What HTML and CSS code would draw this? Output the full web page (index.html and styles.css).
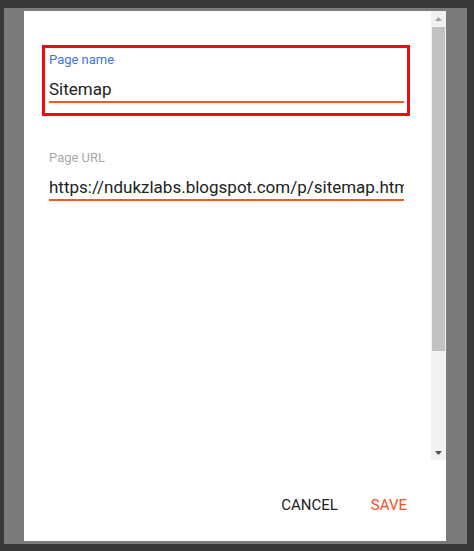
FILE: index.html
```html
<!DOCTYPE html>
<html lang="en">
<head>
    <meta charset="UTF-8">
    <title>Edit page</title>
    <link rel="stylesheet" href="styles.css">
</head>
<body>
<div class="backdrop">
    <div class="dialog">
        <div class="dialog-body">
            <div class="dialog-form">
                <div class="field field-active">
                    <label class="field-label">Page name</label>
                    <div class="field-input">Sitemap</div>
                </div>
                <div class="field">
                    <label class="field-label">Page URL</label>
                    <div class="field-input">https://ndukzlabs.blogspot.com/p/sitemap.html</div>
                </div>
            </div>
            <div class="scrollbar">
                <span class="scroll-btn">
                    <svg width="7" height="4" viewBox="0 0 7 4"><path d="M3.5 0 L7 4 L0 4 Z" fill="#a3a3a3"/></svg>
                </span>
                <div class="scroll-track">
                    <div class="scroll-thumb"></div>
                </div>
                <span class="scroll-btn">
                    <svg width="7" height="4" viewBox="0 0 7 4"><path d="M0 0 L7 0 L3.5 4 Z" fill="#505050"/></svg>
                </span>
            </div>
        </div>
        <div class="dialog-actions">
            <button class="btn">Cancel</button>
            <button class="btn btn-primary">Save</button>
        </div>
    </div>
</div>
</body>
</html>
```

FILE: styles.css
```css
*{
    margin: 0;
    padding: 0;
    box-sizing: border-box;
}
html, body{
    height: 100%;
}
body{
    background-color: #383838;
    font-family: Roboto, "Liberation Sans", sans-serif;
    overflow: hidden;
}
.backdrop{
    width: 463px;
    height: 536px;
    margin: 8px 0 0 4px;
    padding: 3px 21px 0 20px;
    background-color: #7b7b7b;
}
.dialog{
    width: 422px;
    height: 530px;
    background-color: #fff;
    display: flex;
    flex-direction: column;
}
.dialog-body{
    height: 449px;
    display: flex;
}
.dialog-form{
    flex: 1;
    min-width: 0;
    padding: 34px 21px 0 18px;
}
.field{
    border: 3px solid transparent;
    padding: 4px 3px 10px 4px;
    margin-top: 27px;
}
.field-active{
    border-color: #ec0b12;
    margin-top: 0;
}
.field-label{
    display: block;
    font-size: 13px;
    line-height: 16px;
    color: #a9a9a9;
}
.field-active .field-label{
    color: #4574d6;
}
.field-input{
    margin-top: 9px;
    font-size: 17px;
    line-height: 24px;
    color: #222;
    white-space: nowrap;
    overflow: hidden;
    border-bottom: 2px solid #f05a28;
}

/* scrollbar of the dialog body */
.scrollbar{
    width: 15px;
    display: flex;
    flex-direction: column;
    background-color: #f1f1f1;
}
.scroll-btn{
    height: 15px;
    display: flex;
    align-items: center;
    justify-content: center;
}
.scroll-track{
    flex: 1;
    padding: 1px 0 0 0;
}
.scroll-thumb{
    height: 324px;
    margin: 0 1px;
    background-color: #c1c1c1;
}

.dialog-actions{
    flex: 1;
    display: flex;
    justify-content: flex-end;
    align-items: flex-start;
    padding: 27px 31px 0 0;
}
.btn{
    height: 36px;
    padding: 0 8px;
    margin-left: 17px;
    border: none;
    background: none;
    font-family: Roboto, "Liberation Sans", sans-serif;
    font-size: 15px;
    font-weight: 400;
    text-transform: uppercase;
    color: #222;
    cursor: pointer;
}
.btn-primary{
    color: #f4511e;
}
```
